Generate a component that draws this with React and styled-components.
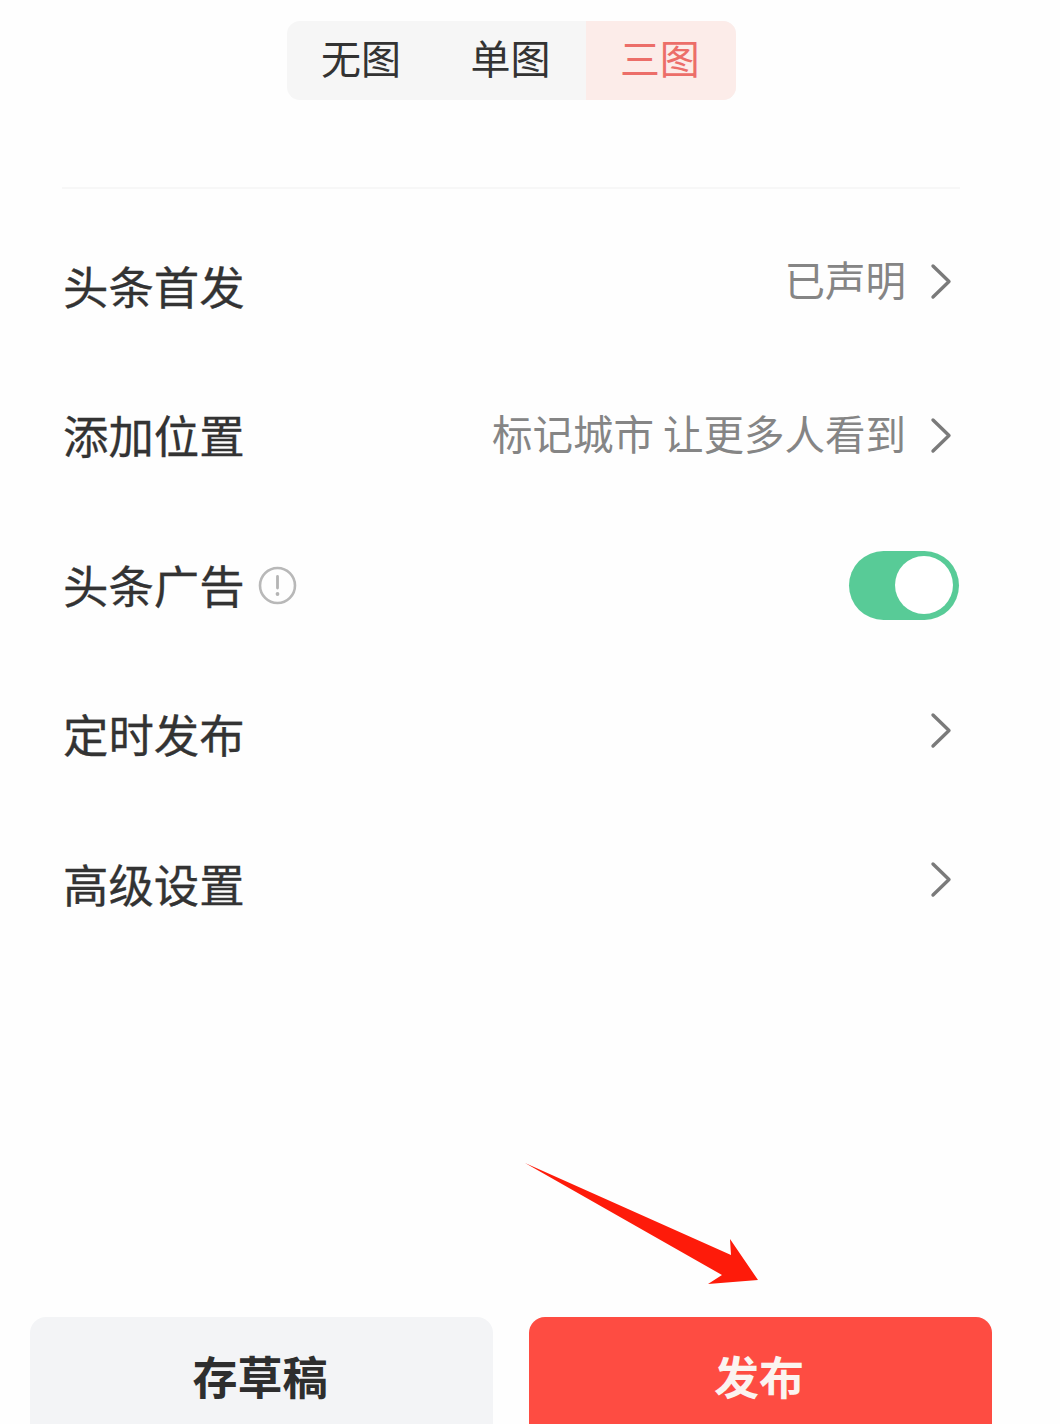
import React from 'react';
import styled, { createGlobalStyle } from 'styled-components';

const GlobalStyle = createGlobalStyle`
  html, body { margin: 0; padding: 0; background: #fefefe; }
  body { font-family: "Noto Sans CJK SC", "Liberation Sans", sans-serif; }
`;

const Page = styled.div`
  position: relative;
  width: 1060px;
  height: 1424px;
  overflow: hidden;
  display: flex;
  flex-direction: column;
  background: #fefefe;
  color: #333;
`;

const Content = styled.main`
  display: flex;
  flex-direction: column;
  padding: 21px 100px 0 63px;
`;

const Segments = styled.div`
  align-self: center;
  display: flex;
  height: 79px;
  border-radius: 13px;
  overflow: hidden;
  background: #f6f6f6;
`;

const Segment = styled.div`
  box-sizing: border-box;
  width: 149.4px;
  padding: 0 2px 8px 0;
  display: flex;
  align-items: center;
  justify-content: center;
  font-size: 40px;
  line-height: 1;
  color: ${(p) => (p.$active ? '#ec6e69' : '#333')};
  background: ${(p) => (p.$active ? '#fcece9' : 'transparent')};
`;

const Divider = styled.hr`
  width: 898px;
  height: 2px;
  margin: 87px 0 23px -1px;
  border: 0;
  background: #f7f7f7;
`;

const Row = styled.div`
  height: 149.5px;
  display: flex;
  align-items: center;
  justify-content: space-between;
`;

const Label = styled.div`
  display: flex;
  align-items: center;
  gap: 13px;
  font-size: 45.4px;
  line-height: 1;
  color: #333;
  -webkit-text-stroke: 0.3px #333;
`;

const LabelText = styled.span`
  margin-bottom: 3px;
`;

const Aside = styled.div`
  display: flex;
  align-items: center;
  gap: 24px;
  margin-right: 8px;
  margin-bottom: ${(p) => p.$lift || 0}px;
  font-size: 40.5px;
  line-height: 1;
  color: #858585;
  white-space: pre;
`;

const AsideText = styled.span`
  margin-bottom: 5px;
`;

const Toggle = styled.div`
  box-sizing: border-box;
  width: 110px;
  height: 69px;
  margin-right: 1px;
  padding: 5px 6px 6px 0;
  display: flex;
  justify-content: flex-end;
  border-radius: 35px;
  background: #58cb97;
`;

const Knob = styled.div`
  width: 58px;
  height: 58px;
  border-radius: 50%;
  background: #fff;
`;

const Footer = styled.footer`
  margin-top: auto;
  height: 107px;
  padding-left: 30px;
  display: flex;
  gap: 36px;
`;

const FooterButton = styled.div`
  box-sizing: border-box;
  width: 463px;
  height: 122px;
  flex-shrink: 0;
  padding: 0 3px 6px 0;
  display: flex;
  align-items: center;
  justify-content: center;
  border-radius: 16px;
  font-size: 45px;
  font-weight: 700;
  line-height: 1;
  color: ${(p) => (p.$primary ? '#fbf4f0' : '#2e2e2e')};
  background: ${(p) => (p.$primary ? '#fe4c42' : '#f3f4f6')};
`;

const Pointer = styled.svg`
  position: absolute;
  left: 520px;
  top: 1158px;
  width: 245px;
  height: 132px;
`;

const Chevron = () => (
  <svg width="22" height="37" viewBox="0 0 22 37" fill="none">
    <path d="M3 3 L19 18.5 L3 34" stroke="#7a7a7a" strokeWidth="3.4" strokeLinecap="round" strokeLinejoin="round" />
  </svg>
);

const InfoIcon = () => (
  <svg width="39" height="39" viewBox="0 0 39 39" fill="none">
    <circle cx="19.5" cy="19.5" r="17.5" stroke="#b8b8b8" strokeWidth="2.6" />
    <path d="M19.5 10.5 V22" stroke="#b4b4b4" strokeWidth="2.8" strokeLinecap="round" />
    <circle cx="19.5" cy="28" r="1.9" fill="#b4b4b4" />
  </svg>
);

export default function App() {
  return (
    <Page>
      <GlobalStyle />
      <Content>
        <Segments>
          <Segment>无图</Segment>
          <Segment>单图</Segment>
          <Segment $active>三图</Segment>
        </Segments>
        <Divider />
        <Row>
          <Label><LabelText>头条首发</LabelText></Label>
          <Aside $lift={10}><AsideText>已声明</AsideText><Chevron /></Aside>
        </Row>
        <Row>
          <Label><LabelText>添加位置</LabelText></Label>
          <Aside $lift={2}><AsideText>标记城市 让更多人看到</AsideText><Chevron /></Aside>
        </Row>
        <Row>
          <Label><LabelText>头条广告</LabelText><InfoIcon /></Label>
          <Toggle><Knob /></Toggle>
        </Row>
        <Row>
          <Label><LabelText>定时发布</LabelText></Label>
          <Aside $lift={10}><Chevron /></Aside>
        </Row>
        <Row>
          <Label><LabelText>高级设置</LabelText></Label>
          <Aside $lift={10}><Chevron /></Aside>
        </Row>
      </Content>
      <Footer>
        <FooterButton>存草稿</FooterButton>
        <FooterButton $primary>发布</FooterButton>
      </Footer>
      <Pointer viewBox="520 1158 245 132">
        <polygon points="525,1163 731,1255 730,1239 758,1280 708,1284 722,1275" fill="#fe1b0a" />
      </Pointer>
    </Page>
  );
}
